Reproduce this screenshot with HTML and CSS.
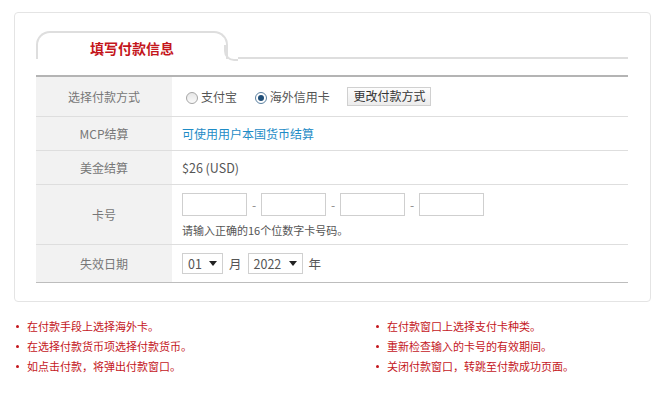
FILE: index.html
```html
<!DOCTYPE html>
<html lang="zh-CN">
<head>
  <meta charset="UTF-8">
  <title>填写付款信息</title>
  <link rel="stylesheet" href="styles.css">
</head>
<body>
  <div class="page">
    <div class="panel">
      <div class="tabs">
        <div class="tab">填写付款信息</div>
        <div class="tab-line"></div>
      </div>

      <table class="pay-table">
        <tr class="row-method">
          <th>选择付款方式</th>
          <td>
            <span class="radio"></span><span class="radio-label">支付宝</span>
            <span class="radio checked"></span><span class="radio-label">海外信用卡</span>
            <button class="btn">更改付款方式</button>
          </td>
        </tr>
        <tr>
          <th>MCP结算</th>
          <td><a class="link" href="#">可使用用户本国货币结算</a></td>
        </tr>
        <tr>
          <th>美金结算</th>
          <td class="price">$26 (USD)</td>
        </tr>
        <tr class="row-card">
          <th>卡号</th>
          <td>
            <div class="card-inputs">
              <input type="text" class="card-input">
              <span class="dash">-</span>
              <input type="text" class="card-input">
              <span class="dash">-</span>
              <input type="text" class="card-input">
              <span class="dash">-</span>
              <input type="text" class="card-input">
            </div>
            <p class="hint">请输入正确的16个位数字卡号码。</p>
          </td>
        </tr>
        <tr class="row-date">
          <th>失效日期</th>
          <td>
            <div class="date-select">
              <span class="select select-month">01<i class="caret"></i></span>
              <span class="unit">月</span>
              <span class="select select-year">2022<i class="caret"></i></span>
              <span class="unit">年</span>
            </div>
          </td>
        </tr>
      </table>
    </div>

    <div class="notes">
      <ul>
        <li>在付款手段上选择海外卡。</li>
        <li>在选择付款货币项选择付款货币。</li>
        <li>如点击付款，将弹出付款窗口。</li>
      </ul>
      <ul>
        <li>在付款窗口上选择支付卡种类。</li>
        <li>重新检查输入的卡号的有效期间。</li>
        <li>关闭付款窗口，转跳至付款成功页面。</li>
      </ul>
    </div>
  </div>
</body>
</html>
```

FILE: styles.css
```css
:root {
  --red: #c4161c;
  --blue: #1e8cc6;
  --text: #555;
  --label: #777;
  --line: #dedede;
  --label-bg: #f2f2f2;
}

* {
  margin: 0;
  padding: 0;
  box-sizing: border-box;
}

body {
  font-family: "Noto Sans CJK SC", "Noto Sans", sans-serif;
  font-size: 12px;
  color: var(--text);
  background: #fff;
}

.page {
  padding: 12px 14px 0 14px;
}

.panel {
  width: 637px;
  border: 1px solid #e4e4e4;
  border-radius: 4px;
  padding: 18px 22px 18px 21px;
}

/* tab header */
.tabs {
  display: flex;
  align-items: flex-end;
  height: 28px;
}

.tab {
  position: relative;
  width: 192px;
  height: 28px;
  border: 2px solid var(--line);
  border-bottom: none;
  border-radius: 14px 14px 0 0;
  text-align: center;
  line-height: 30px;
  font-size: 14px;
  font-weight: bold;
  color: var(--red);
}

.tab::after {
  content: '';
  position: absolute;
  right: -12px;
  bottom: -2px;
  width: 12px;
  height: 14px;
  border-left: 2px solid var(--line);
  border-bottom: 2px solid var(--line);
  border-bottom-left-radius: 10px;
}

.tab-line {
  flex: 1;
  height: 2px;
  margin-left: 10px;
  background: var(--line);
}

/* form table */
.pay-table {
  width: 100%;
  margin-top: 16px;
  border-collapse: collapse;
  border-top: 2px solid #b4b4b4;
  border-bottom: 1px solid #bdbdbd;
}

.pay-table tr {
  height: 34px;
  border-bottom: 1px solid var(--line);
}

.pay-table tr:last-child {
  border-bottom: none;
}

.pay-table th {
  width: 136px;
  background: var(--label-bg);
  color: var(--label);
  font-weight: normal;
  text-align: center;
}

.pay-table td {
  padding-left: 10px;
  color: var(--text);
}

.row-method {
  height: 40px !important;
}

.row-card {
  height: 60px !important;
}

.row-date {
  height: 38px !important;
}

.radio {
  display: inline-block;
  width: 12px;
  height: 12px;
  border: 1px solid #a6a6a6;
  border-radius: 50%;
  background: linear-gradient(#e6e6e6, #fafafa);
  vertical-align: -2px;
  margin-left: 4px;
  position: relative;
}

.radio.checked {
  border-color: #5a7fa0;
  background: #fff;
}

.radio.checked::after {
  content: '';
  position: absolute;
  top: 2px;
  left: 2px;
  width: 6px;
  height: 6px;
  border-radius: 50%;
  background: #1f4e78;
}

.radio-label {
  margin-left: 3px;
  margin-right: 11px;
}

.btn {
  font-family: inherit;
  font-size: 12px;
  color: #333;
  height: 19px;
  padding: 0 5px;
  margin-left: 4px;
  border: 1px solid #d0d0d0;
  background: linear-gradient(#fdfdfd, #ececec);
  line-height: 16px;
  vertical-align: 1px;
}

.link {
  color: var(--blue);
  text-decoration: none;
}

.price {
  font-size: 12.5px;
}

.card-inputs {
  display: flex;
  align-items: center;
  margin-top: 8px;
}

.card-input {
  width: 65px;
  height: 23px;
  border: 1px solid #cfcfcf;
  outline: none;
}

.dash {
  width: 14px;
  text-align: center;
  color: #888;
}

.hint {
  font-size: 11px;
  margin-top: 6px;
  margin-bottom: 6px;
}

.date-select {
  display: flex;
  align-items: center;
}

.select {
  display: flex;
  align-items: center;
  justify-content: space-between;
  height: 21px;
  border: 1px solid #d0d0d0;
  padding: 0 5px;
  font-size: 12.5px;
  color: #555;
}

.select-month {
  width: 41px;
}

.select-year {
  width: 55px;
}

.caret {
  width: 0;
  height: 0;
  border-left: 4px solid transparent;
  border-right: 4px solid transparent;
  border-top: 5px solid #222;
}

.unit {
  margin: 0 6px;
  font-size: 12.5px;
}

/* notes */
.notes {
  display: grid;
  grid-template-columns: 360px 1fr;
  padding: 14px 0 0 2px;
}

.notes ul {
  list-style: none;
}

.notes li {
  position: relative;
  padding-left: 11px;
  line-height: 20px;
  font-size: 11px;
  color: var(--red);
}

.notes li::before {
  content: '';
  position: absolute;
  left: 0;
  top: 9px;
  width: 3px;
  height: 3px;
  border-radius: 50%;
  background: var(--red);
}
```
